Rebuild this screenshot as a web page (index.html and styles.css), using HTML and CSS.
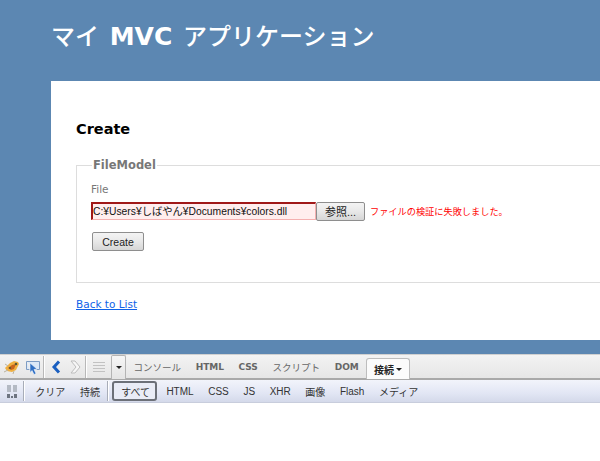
FILE: index.html
```html
<!DOCTYPE html>
<html lang="ja">
<head>
<meta charset="utf-8">
<title>Create</title>
<link rel="stylesheet" href="styles.css">
</head>
<body>
<div class="page">
  <h1 class="title">マイ<span class="title-latin"> MVC </span>アプリケーション</h1>
  <main class="main">
    <h2 class="heading">Create</h2>
    <fieldset class="fields">
      <legend class="legend">FileModel</legend>
      <div class="label">File</div>
      <div class="file-row">
        <div class="file-input">C:¥Users¥しばやん¥Documents¥colors.dll</div>
        <div class="btn browse">参照...</div>
        <span class="error">ファイルの検証に失敗しました。</span>
      </div>
      <div class="btn create">Create</div>
    </fieldset>
    <a class="back" href="#">Back to List</a>
  </main>
</div>
<div class="fb-top">
  <svg class="ic bug" width="18" height="16" viewBox="0 0 18 16"><path d="M2 9l5-5 4-2 4 1 1 2-3 6-4 2-5-1z" fill="#f0b040"/><path d="M5 9l4-3 4-1-2 5-3 1z" fill="#c8641c"/><circle cx="13" cy="5" r="1.300" fill="#553"/><circle cx="7" cy="9" r="1.100" fill="#553"/><path d="M1 13l4-2M2 5l3 2M10 15l1-3" stroke="#b9b2a0" fill="none"/></svg>
  <svg class="ic inspect" width="16" height="16" viewBox="0 0 16 16"><path d="M1.500 2.500h13v8h-3M1.500 2.500v8h3" fill="#dbe8f7" stroke="#7d9cc4"/><path d="M5 4l7 6-3 .5 2 4-2 1-2-4-2 2z" fill="#2f6fc4" stroke="#e8f0fa" stroke-width=".6"/></svg>
  <i class="sep sep-a"></i>
  <svg class="ic back-ic" width="10" height="14" viewBox="0 0 10 14"><path d="M8 1.500L3 7l5 5.500" fill="none" stroke="#1a5fc0" stroke-width="3"/></svg>
  <svg class="ic fwd-ic" width="12" height="14" viewBox="0 0 12 14"><path d="M2 1l4 0 5 6-5 6-4 0 5-6z" fill="#f6f6f6" stroke="#bdbdbd"/></svg>
  <i class="sep sep-b"></i>
  <svg class="ic list-ic" width="14" height="12" viewBox="0 0 14 12"><path d="M1 1.500h12M1 4.500h12M1 7.500h12M1 10.500h12" stroke="#c2c2c2"/></svg>
  <div class="menu-drop"><i class="caret"></i></div>
  <div class="tabs">
    <span class="tab">コンソール</span>
    <span class="tab bold">HTML</span>
    <span class="tab bold">CSS</span>
    <span class="tab">スクリプト</span>
    <span class="tab bold">DOM</span>
    <span class="tab active">接続<i class="caret"></i></span>
  </div>
</div>
<div class="fb-sub">
  <svg class="ic pause" width="14" height="15" viewBox="0 0 14 15"><path d="M2 1h4v7H2zM8 1h4v7H8z" fill="#b4bac4"/><path d="M2 10h3v4H2zM6 12h2v2H6zM9 10h3v4H9z" fill="#6d7480"/></svg>
  <i class="sep short first"></i>
  <span class="sub">クリア</span>
  <span class="sub">持続</span>
  <i class="sep short second"></i>
  <span class="sub on">すべて</span>
  <span class="sub">HTML</span>
  <span class="sub">CSS</span>
  <span class="sub">JS</span>
  <span class="sub">XHR</span>
  <span class="sub">画像</span>
  <span class="sub">Flash</span>
  <span class="sub">メディア</span>
</div>
</body>
</html>
```
FILE: styles.css
```css
* { box-sizing: border-box; }
html, body { margin: 0; padding: 0; background: #fff; overflow: hidden; }
body { width: 600px; height: 461px; font-family: "DejaVu Sans", "Noto Sans CJK JP", sans-serif; font-size: 11px; }
.page { background: #5c87b2; height: 354px; padding-left: 51px; overflow: hidden; }
.title { margin: 0; height: 81px; padding-top: 18px; color: #fff; font-size: 24px; line-height: 34px; font-weight: 500; font-family: "Noto Sans CJK JP", sans-serif; white-space: nowrap; }
.title-latin { font-family: "DejaVu Sans", sans-serif; font-size: 25px; font-weight: 700; word-spacing: 2px; }
.main { background: #fff; height: 259px; width: 560px; padding: 39px 0 0 25px; }
.heading { margin: 0; font-size: 14.500px; line-height: 18px; color: #000; font-weight: 700; }
.fields { margin: 19px 0 0; padding: 0 0 0 14px; height: 126px; width: 560px; border: 1px solid #ddd; min-width: 0; }
.legend { margin-left: 1px; padding: 0 1px; font-size: 11.500px; line-height: 16px; font-weight: 700; color: #777; }
.label { margin-top: 9px; height: 15px; line-height: 15px; color: #777; font-size: 10.500px; }
.file-row { display: flex; align-items: center; margin-top: 4px; height: 20px; }
.file-input { width: 225px; height: 18px; border: 1px solid #f4b0b0; border-top: 2px solid #a01818; border-left: 2px solid #a01818; background: #ffeeee; color: #111; font-size: 10.300px; line-height: 15px; white-space: nowrap; overflow: hidden; font-family: "Liberation Sans", "Noto Sans CJK JP", sans-serif; }
.btn { display: flex; align-items: center; justify-content: center; border: 1px solid #8e8e8e; border-radius: 2px; background: linear-gradient(#f4f4f4, #e8e8e8 50%, #d6d6d6); color: #222; font-family: "Liberation Sans", "Noto Sans CJK JP", sans-serif; font-size: 11px; }
.browse { width: 49px; height: 19px; }
.error { margin-left: 5px; color: #f00; font-size: 9.200px; line-height: 16px; white-space: nowrap; font-family: "Noto Sans CJK JP", sans-serif; }
.create { width: 52px; height: 19px; margin: 11px 0 0 1px; font-size: 10.500px; }
.back { display: block; margin-top: 14px; color: #0f62e8; font-size: 10.500px; line-height: 15px; text-decoration: underline; }
.ic { display: block; flex: none; }
.sep { display: block; flex: none; width: 1px; height: 22px; background: #b8b8b8; box-shadow: 1px 0 0 #fff; }
.sep.short { height: 20px; background: #a8adb8; }
.fb-top { display: flex; align-items: center; height: 26px; background: linear-gradient(#f3f3f3, #e6e6e6); border-top: 1px solid #d0d0d0; border-bottom: 2px solid #a9a9a9; padding-left: 3px; font-family: "DejaVu Sans", "Noto Sans CJK JP", sans-serif; }
.inspect { margin-left: 4px; }
.sep-a { margin-left: 2px; }
.back-ic { margin-left: 7px; }
.fwd-ic { margin-left: 8px; }
.sep-b { margin-left: 4px; }
.list-ic { margin-left: 6px; }
.menu-drop { width: 15px; height: 24px; margin-top: 1px; margin-left: 5px; border: 1px solid #b4b4b4; border-bottom: 0; border-radius: 2px 2px 0 0; background: linear-gradient(#f6f6f6, #e4e4e4); display: flex; align-items: center; justify-content: center; }
.caret { display: inline-block; width: 0; height: 0; border-left: 3px solid transparent; border-right: 3px solid transparent; border-top: 3px solid #222; }
.tabs { display: flex; align-items: flex-end; align-self: flex-end; height: 100%; }
.tab { display: flex; align-items: center; height: 21px; margin-bottom: 1px; padding: 0 7.500px; color: #666; font-size: 9.500px; font-family: "Noto Sans CJK JP", sans-serif; }
.tab.bold { font-family: "DejaVu Sans", sans-serif; font-weight: 700; font-size: 9px; padding: 0 7.200px; }
.tab.active { height: 21px; margin-bottom: -1px; padding: 0 7px; background: #fbfbfb; border: 1px solid #bdbdbd; border-bottom: 0; border-radius: 3px 3px 0 0; color: #222; font-size: 10px; font-weight: 700; gap: 2px; }
.fb-sub { display: flex; align-items: center; height: 23px; padding-left: 5px; background: linear-gradient(#f2f4fb, #e2e6f4 60%, #d4d9ea); border-bottom: 1px solid #c8cddc; font-family: "DejaVu Sans", "Noto Sans CJK JP", sans-serif; }
.sep.first { margin: 0 4px; }
.sep.second { margin: 0 4px 0 0; }
.sub { display: flex; align-items: center; height: 20px; padding: 0 7.300px; color: #333; font-size: 10px; white-space: nowrap; font-family: "Liberation Sans", "Noto Sans CJK JP", sans-serif; }
.sub.on { padding: 0 5px 0 7px; border: 2px solid #6c7078; border-radius: 3px; background: #e9ecf6; margin-right: 2px; }
```
